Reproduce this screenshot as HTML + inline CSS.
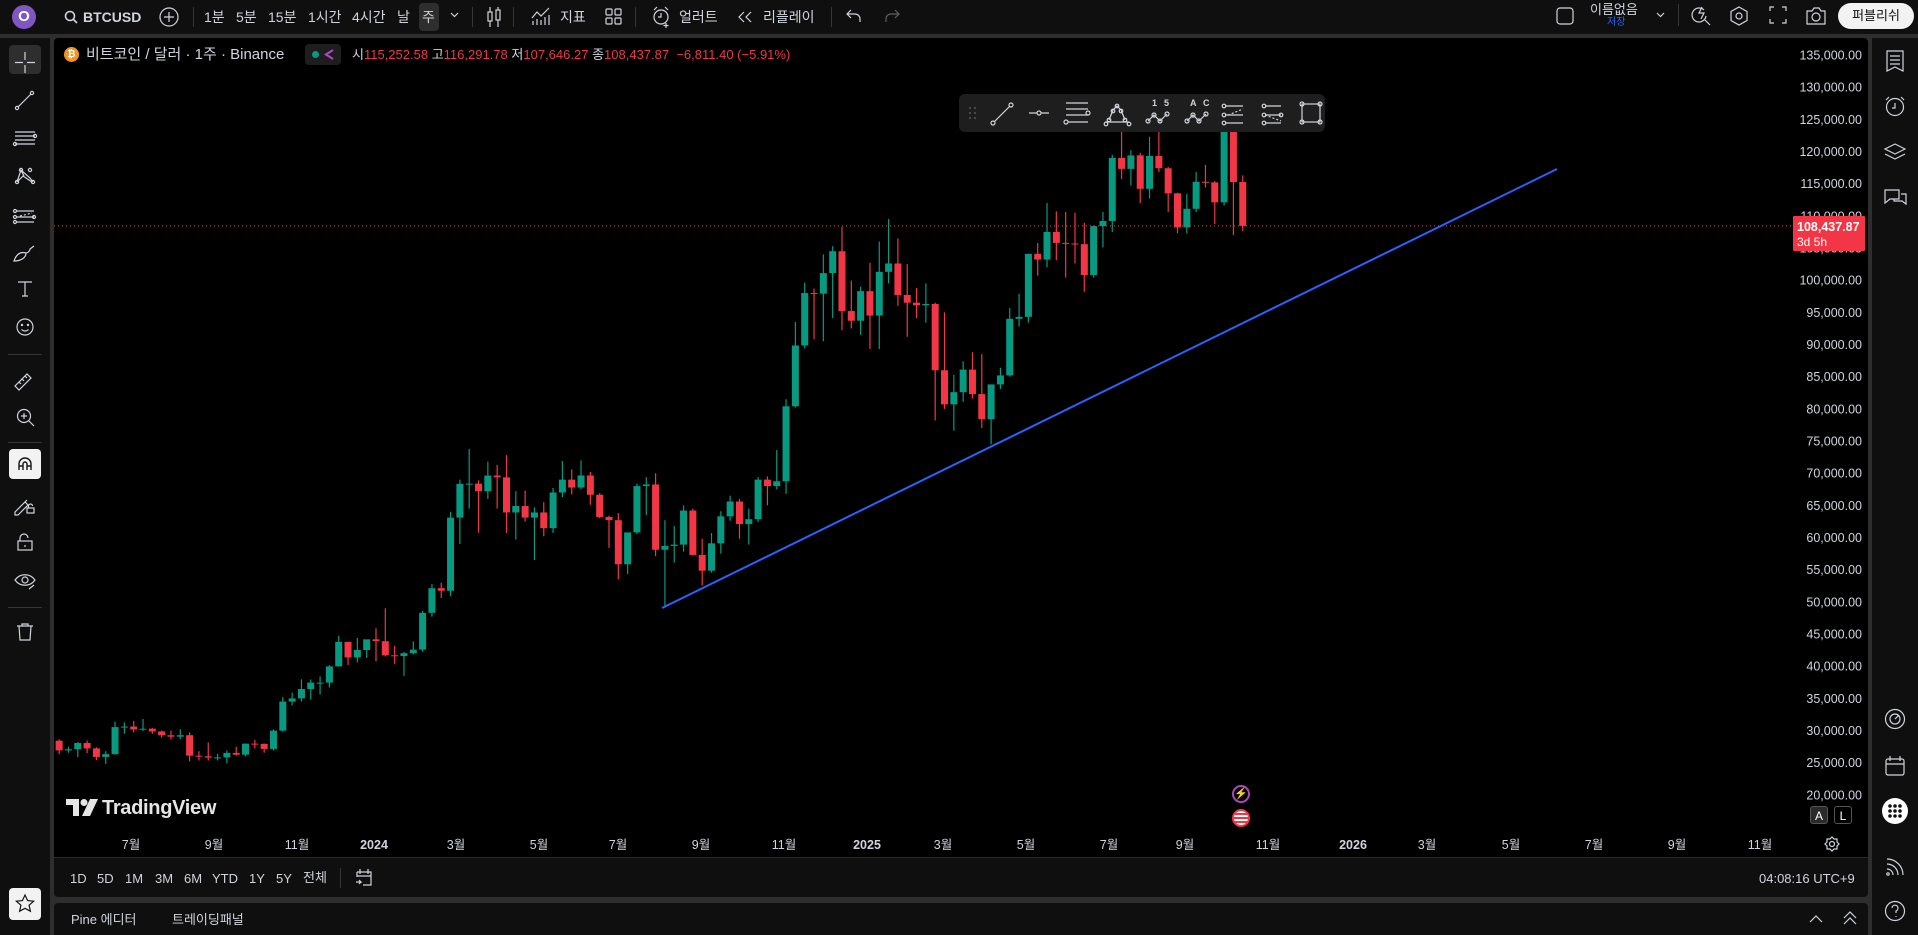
<!DOCTYPE html>
<html><head><meta charset="utf-8">
<style>
*{margin:0;padding:0;box-sizing:border-box}
html,body{width:1918px;height:935px;overflow:hidden;background:#2e2e2e;font-family:"Liberation Sans","Noto Sans CJK KR",sans-serif;color:#d1d4dc}
.abs{position:absolute}
#top{left:0;top:0;width:1918px;height:34px;background:#0f0f0f}
#left{left:0;top:38px;width:50px;height:897px;background:#0f0f0f}
#chart{left:54px;top:38px;width:1814px;height:819px;background:#000;border-radius:4px 4px 0 0;overflow:hidden}
#range{left:54px;top:857px;width:1814px;height:40px;background:#0f0f0f;border-top:1px solid #2a2a2a;border-radius:0 0 4px 4px}
#bottom{left:54px;top:903px;width:1814px;height:32px;background:#0f0f0f;border-radius:4px 4px 0 0}
#right{left:1872px;top:38px;width:46px;height:897px;background:#0f0f0f}
.t{position:absolute;font-size:14px;color:#d1d4dc;white-space:nowrap;line-height:1}
.sep{position:absolute;width:1px;background:#363636}
svg{position:absolute;overflow:visible}
.ic{stroke:#d1d4dc;fill:none;stroke-width:1.2}
</style></head><body>
<div id="top" class="abs">
  <div class="abs" style="left:12px;top:5px;width:24px;height:24px;border-radius:50%;background:#7e57c2;color:#fff;font-size:15px;font-weight:bold;text-align:center;line-height:24px">O</div>
  <svg style="left:64px;top:10px" width="14" height="14" class="ic"><circle cx="6" cy="6" r="4.5" stroke-width="1.6"/><line x1="9.5" y1="9.5" x2="13" y2="13" stroke-width="1.6"/></svg>
  <div class="t" style="left:83px;top:10px;font-weight:bold;font-size:14px">BTCUSD</div>
  <svg style="left:159px;top:7px" width="20" height="20" class="ic"><circle cx="10" cy="10" r="9"/><path d="M10 5v10M5 10h10"/></svg>
  <div class="sep" style="left:193px;top:7px;height:20px"></div>
  <div class="t" style="left:204px;top:10px">1분</div>
  <div class="t" style="left:236px;top:10px">5분</div>
  <div class="t" style="left:268px;top:10px">15분</div>
  <div class="t" style="left:308px;top:10px">1시간</div>
  <div class="t" style="left:352px;top:10px">4시간</div>
  <div class="t" style="left:397px;top:10px">날</div>
  <div class="abs" style="left:419px;top:3px;width:20px;height:28px;background:#2e2e2e;border-radius:4px"></div>
  <div class="t" style="left:422px;top:10px">주</div>
  <svg style="left:450px;top:12px" width="9" height="6" class="ic"><path d="M1 1l3.5 3.5L8 1"/></svg>
  <div class="sep" style="left:472px;top:7px;height:20px"></div>
  <svg style="left:486px;top:6px" width="16" height="22" class="ic"><path d="M4 1v20M12 1v20"/><rect x="2" y="6" width="4" height="9" fill="#0f0f0f"/><rect x="10" y="4" width="4" height="10" fill="#0f0f0f"/></svg>
  <div class="sep" style="left:513px;top:7px;height:20px"></div>
  <svg style="left:531px;top:6px" width="20" height="20" class="ic"><path d="M1 12l5-6 4 4 8-8"/><path d="M2 19v-4M6 19v-6M10 19v-5M14 19v-8M18 19v-10"/></svg>
  <div class="t" style="left:560px;top:10px">지표</div>
  <svg style="left:605px;top:8px" width="18" height="18" class="ic"><rect x="1" y="1" width="6" height="6" rx="1"/><rect x="10" y="1" width="6" height="6" rx="1"/><rect x="1" y="10" width="6" height="6" rx="1"/><rect x="10" y="10" width="6" height="6" rx="1"/></svg>
  <div class="sep" style="left:635px;top:7px;height:20px"></div>
  <svg style="left:651px;top:6px" width="22" height="22" class="ic"><circle cx="10" cy="11" r="7"/><path d="M10 7v4h-3M3 4l3-3M17 4l-3-3M15 17v5M12.5 19.5h5"/></svg>
  <div class="t" style="left:679px;top:10px">얼러트</div>
  <svg style="left:738px;top:11px" width="14" height="12" class="ic"><path d="M6 1L1 6l5 5M13 1L8 6l5 5"/></svg>
  <div class="t" style="left:763px;top:10px">리플레이</div>
  <div class="sep" style="left:831px;top:7px;height:20px"></div>
  <svg style="left:846px;top:9px" width="16" height="14" class="ic"><path d="M5 1L1 5l4 4M1 5h8a5 5 0 0 1 5 5v3"/></svg>
  <svg style="left:884px;top:9px" width="16" height="14" class="ic"><path d="M11 1l4 4-4 4M15 5H7a5 5 0 0 0-5 5v3" stroke="#5d606b"/></svg>
  <svg style="left:1556px;top:7px" width="18" height="18" class="ic"><rect x="1" y="1" width="16" height="16" rx="3"/></svg>
  <div class="t" style="left:1590px;top:3px;font-size:13px">이름없음</div>
  <div class="t" style="left:1607px;top:18px;font-size:10px;color:#2962ff">저장</div>
  <svg style="left:1656px;top:12px" width="9" height="6" class="ic"><path d="M1 1l3.5 3.5L8 1"/></svg>
  <div class="sep" style="left:1678px;top:4px;height:22px"></div>
  <svg style="left:1691px;top:6px" width="20" height="20" class="ic"><path d="M13 4a7 7 0 1 0 2 6"/><path d="M11 1l-3 6h5l-3 6"/><path d="M14 14l5 5"/></svg>
  <svg style="left:1729px;top:6px" width="20" height="20" class="ic"><path d="M10 1l8 4.5v9L10 19l-8-4.5v-9z"/><circle cx="10" cy="10" r="3"/></svg>
  <svg style="left:1769px;top:6px" width="18" height="18" class="ic"><path d="M1 5V1h4M13 1h4v4M17 13v4h-4M5 17H1v-4"/></svg>
  <svg style="left:1805px;top:6px" width="22" height="20" class="ic"><path d="M2 5h5l2-3h5l2 3h4v13H2z"/><circle cx="11" cy="11" r="4"/></svg>
  <div class="abs" style="left:1838px;top:3px;width:76px;height:26px;background:#f2f2f2;border-radius:13px;color:#0f0f0f;font-size:13px;text-align:center;line-height:26px">퍼블리쉬</div>
</div>

<div id="left" class="abs">
  <div class="abs" style="left:9px;top:7px;width:32px;height:29px;background:#2e2e2e;border-radius:4px"></div>
  <div class="abs" style="left:9px;top:411px;width:32px;height:30px;background:#f2f2f2;border-radius:4px"></div>
  <div class="abs" style="left:8px;top:316px;width:34px;height:1px;background:#363636"></div>
  <div class="abs" style="left:8px;top:404px;width:34px;height:1px;background:#363636"></div>
  <div class="abs" style="left:8px;top:569px;width:34px;height:1px;background:#363636"></div>
  <svg style="left:0;top:0" width="50" height="897" class="ic">
    <path d="M25 14v8M25 27v8M15 24.5h8M27 24.5h8"/>
    <g transform="translate(0,61)"><path d="M18 8l13-13"/><circle cx="17" cy="9" r="1.6"/><circle cx="32" cy="-6" r="1.6"/></g>
    <g transform="translate(0,100)"><path d="M15-6h20M15-2h20M15 2h20M15 6h20"/><circle cx="35" cy="-2" r="1.6"/><circle cx="15" cy="6" r="1.6"/></g>
    <g transform="translate(0,138)"><path d="M17 6l4-12 9 8 3 4M17 6l6-6 9 6M21-6l3 6"/><circle cx="17" cy="6" r="1.6"/><circle cx="21" cy="-6" r="1.6"/><circle cx="30" cy="-6" r="1.6"/><circle cx="33" cy="6" r="1.6"/></g>
    <g transform="translate(0,178)"><path d="M17-5h17M17 1h17M17 6h17" /><path d="M20 0l12-3" stroke-dasharray="2 2"/><circle cx="15" cy="-5" r="1.5"/><circle cx="15" cy="1" r="1.5"/><circle cx="15" cy="6" r="1.5"/><circle cx="34" cy="1" r="1.5"/></g>
    <g transform="translate(0,215)"><path d="M14 8c2-6 6-10 12-8 0 4-4 8-12 8zM26 0c2 0 4-2 4-4l4-3"/></g>
    <g transform="translate(0,251)"><path d="M18-7h14M25-7v14M22 7h6"/></g>
    <g transform="translate(0,289)"><circle cx="25" cy="0" r="8"/><circle cx="22" cy="-2" r=".6"/><circle cx="28" cy="-2" r=".6"/><path d="M21.5 2.5c2 2 5 2 7 0"/></g>
    <g transform="translate(0,343)"><path d="M15 5l12-12 4 4-12 12zM19 1l2 2M22-2l2 2M25-5l2 2"/></g>
    <g transform="translate(0,379)"><circle cx="24" cy="-1" r="6.5"/><path d="M24-4v6M21-1h6M29 4l5 5"/></g>
    <g transform="translate(0,425)" stroke="#131313" stroke-width="1.4"><path d="M19 7v-6a6 6 0 0 1 12 0v6M19 3h4M27 3h4M23 7v-6a2 2 0 0 1 4 0v6"/></g>
    <g transform="translate(0,466)"><path d="M15 8l10-10 3 3-10 10h-3zM25-2l2-2"/><rect x="27" y="4" width="7" height="5"/><path d="M28.5 4v-2a2 2 0 0 1 4 0"/></g>
    <g transform="translate(0,504)"><rect x="18" y="-1" width="14" height="9"/><path d="M20-1v-3a4 4 0 0 1 8 0M25 3v2"/></g>
    <g transform="translate(0,542)"><path d="M15 0c5-7 15-7 20 0-5 7-15 7-20 0z"/><circle cx="25" cy="0" r="3"/><path d="M29 9l5-4"/></g>
    <g transform="translate(0,594)"><path d="M17-6h16M22-6v-2h6v2M19-6l1 14h10l1-14"/></g>
  </svg>
  <div class="abs" style="left:9px;top:850px;width:32px;height:32px;background:#f2f2f2;border-radius:4px"></div>
  <svg style="left:15px;top:856px" width="20" height="20"><path d="M10 1l2.6 5.6 6 .6-4.5 4 1.3 6L10 14.3 4.6 17.2l1.3-6-4.5-4 6-.6z" fill="none" stroke="#131313" stroke-width="1.2"/></svg>
</div>

<div id="chart" class="abs"><svg id="cs" style="left:0;top:0" width="1814" height="819"></svg></div>

<div id="range" class="abs">
  <div class="t" style="left:16px;top:14px;font-size:13px">1D</div>
  <div class="t" style="left:43px;top:14px;font-size:13px">5D</div>
  <div class="t" style="left:71px;top:14px;font-size:13px">1M</div>
  <div class="t" style="left:101px;top:14px;font-size:13px">3M</div>
  <div class="t" style="left:130px;top:14px;font-size:13px">6M</div>
  <div class="t" style="left:158px;top:14px;font-size:13px">YTD</div>
  <div class="t" style="left:195px;top:14px;font-size:13px">1Y</div>
  <div class="t" style="left:222px;top:14px;font-size:13px">5Y</div>
  <div class="t" style="left:249px;top:13px;font-size:13px">전체</div>
  <div class="sep" style="left:286px;top:10px;height:20px"></div>
  <svg style="left:301px;top:10px" width="18" height="19" class="ic"><path d="M2 4h14v13H8M2 4v5M2 8h14M5 1v5M13 1v5M1 14h5l-2-2M6 14l-2 2"/></svg>
  <div class="t" style="left:1705px;top:14px;font-size:13px">04:08:16 UTC+9</div>
</div>

<div id="bottom" class="abs">
  <div class="t" style="left:17px;top:10px;font-size:13px">Pine 에디터</div>
  <div class="t" style="left:118px;top:10px;font-size:13px">트레이딩패널</div>
  <svg style="left:1755px;top:12px" width="14" height="8" class="ic"><path d="M1 7l6-6 6 6"/></svg>
  <svg style="left:1789px;top:8px" width="14" height="14" class="ic"><path d="M1 7l6-6 6 6M1 13l6-6 6 6"/></svg>
</div>

<div id="right" class="abs">
  <svg style="left:0;top:0" width="46" height="897" class="ic">
    <g transform="translate(23,23)"><path d="M-8-10h16v20l-8-4-8 4z"/><path d="M-5-5h10M-5-1h10M-5 3h10"/></g>
    <g transform="translate(23,68)"><circle cx="0" cy="1" r="8.5"/><path d="M0-3v5h-3M-9-6l3-3M9-6l-3-3"/></g>
    <g transform="translate(23,114)"><path d="M0-8l10 5-10 5-10-5z"/><path d="M-10 2l10 5 10-5"/></g>
    <g transform="translate(23,160)"><path d="M-10-8h14v9h-9l-5 4z"/><path d="M6-4h5v10l-4-3h-8v-2"/></g>
    <g transform="translate(23,681)"><circle cx="0" cy="0" r="9.5"/><circle cx="0" cy="0" r="5"/><path d="M0 0l4-4"/></g>
    <g transform="translate(23,728)"><rect x="-9" y="-7" width="18" height="16" rx="2"/><path d="M-9-2h18M-5-10v5M5-10v5"/></g>
    <g transform="translate(23,773)"><circle cx="0" cy="0" r="13" fill="#fff" stroke="none"/><g fill="#0f0f0f" stroke="none"><circle cx="-5" cy="-5" r="1.8"/><circle cx="0" cy="-5" r="1.8"/><circle cx="5" cy="-5" r="1.8"/><circle cx="-5" cy="0" r="1.8"/><circle cx="0" cy="0" r="1.8"/><circle cx="5" cy="0" r="1.8"/><circle cx="-5" cy="5" r="1.8"/><circle cx="0" cy="5" r="1.8"/><circle cx="5" cy="5" r="1.8"/></g></g>
    <g transform="translate(23,829)"><path d="M-8-8a16 16 0 0 1 16 16M-8-3a11 11 0 0 1 11 11M-8 2a6 6 0 0 1 6 6"/><circle cx="-7" cy="7" r="1.2"/></g>
    <g transform="translate(23,873)"><circle cx="0" cy="0" r="9.5"/><path d="M-3-3a3 3 0 1 1 4 3v2M1 5v1"/></g>
  </svg>
</div>

<script>
const G='#089981',R='#f23645';
const cs=document.getElementById('cs');let h='';
const OX=54,OY=38;
function Y(p){return 55+(135000-p)/5000*32.17-OY;}
const base=Date.UTC(2024,0,1);
function X(d){return 376+(d-base)/864e5*1.3314-OX;}
const tl=[[131,'7월'],[214,'9월'],[297,'11월'],[374,'2024'],[456,'3월'],[539,'5월'],[618,'7월'],[701,'9월'],[784,'11월'],[867,'2025'],[943,'3월'],[1026,'5월'],[1109,'7월'],[1185,'9월'],[1268,'11월'],[1353,'2026'],[1427,'3월'],[1511,'5월'],[1594,'7월'],[1677,'9월'],[1760,'11월']];
for(const [x,s] of tl){h+=`<text x="${x-OX}" y="${849-OY}" fill="#d1d4dc" font-size="12.5" text-anchor="middle" ${/20/.test(s)?'font-weight="bold"':''} font-family="Liberation Sans,Noto Sans CJK KR,sans-serif">${s}</text>`;}
for(let p=135000;p>=20000;p-=5000){const y=Y(p)+4.5;h+=`<text x="${1862-OX}" y="${y}" fill="#d1d4dc" font-size="12.5" text-anchor="end" font-family="Liberation Sans,sans-serif">${p.toLocaleString('en-US')}.00</text>`;}
const D=[[28630,26320,26920],[27500,26560,27100],[28200,25870,28070],[28450,26510,27230],[27400,25400,25900],[26800,24800,26340],[31400,26250,30540],[31280,29500,30620],[31500,29700,30170],[31800,29950,30290],[30400,29500,29860],[30000,28900,29270],[30000,28600,29050],[30200,28700,29280],[29700,25200,26100],[26800,25350,26000],[28150,25330,25800],[26400,25360,25830],[26900,24900,26530],[27480,26100,26250],[28000,26000,27970],[28580,27200,27930],[28000,26540,27150],[30200,26900,29990],[35200,29800,34500],[35900,33900,35000],[37970,34500,36460],[37950,34800,37450],[38420,35600,37450],[40200,36700,39970],[44700,39960,43780],[43800,40200,41370],[44400,40600,42520],[43800,41300,44180],
[45900,40750,43900],[49000,41500,41700],[43200,40300,41580],[42250,38500,42030],[43880,41800,42580],[48600,42250,48300],[52800,47700,52130],[52980,50600,51730],[64000,50900,63100],[69000,59000,68350],[73780,64500,68380],[68900,60750,67200],[71800,66000,69640],[71300,64500,69360],[72800,60700,63900],[67200,59700,64900],[67300,62500,63100],[64700,56500,63900],[65500,60200,61460],[67700,60700,67000],[71900,66300,69000],[70600,66700,67770],[72000,67500,69650],[70200,65100,66650],[66900,63000,63200],[63400,58400,62700],[63800,53500,55850],[59500,54300,60800],[68400,60500,68000],[69400,63500,68250],[70000,57100,58100],[62700,49100,58700],[61800,56100,58900],[65000,57800,64200],[64500,57200,57300],[59800,52550,54850],[60700,54550,59100],[64100,57500,63300],[66500,62600,65600],[66000,59800,62100],[64500,58900,62850],[69400,62400,69000],[69500,65000,68000],[73600,67500,68750],[81500,66800,80400],[93500,80200,89850],[99600,89400,98000],[98700,90800,97900],[104000,90500,101100],[105300,94100,104500],[108300,92200,95200],[99950,92500,93700],[99000,91500,98300],
[102700,89300,94500],[106000,89300,101300],[109500,99500,102600],[106500,96000,97700],[102500,91200,96500],[98800,94100,96100],[99500,93400,96300],[96500,78200,86000],[95000,80000,80700],[85300,76600,82600],[87400,81100,86100],[88800,81600,82300],[88500,77000,78400],[83500,74500,83800],[86400,83100,85200],[95700,85000,94000],[97900,92800,94300],[104100,93400,104100],[105800,100700,103200],[112000,102000,107500],[110700,103100,105800],[110600,100400,105700],[110500,102600,105600],[108900,98200,100800],[108500,100400,108400],[110600,105100,109200],[119500,107500,119000],[123200,115700,117300],[120200,114700,119400],[119800,112000,114200],[122300,112700,119300],[124500,116800,117400],[117600,110600,113500],[113600,107300,108200],[113400,107300,111100],[116800,110600,115300],[117900,114400,115200],[115400,108700,112100],[125700,111600,123500],[126200,107000,115252.58],[116291.78,107646.27,108437.87]];
let o=28430,t=Date.UTC(2023,4,8);
for(const [hi,lo,c] of D){const x=X(t),col=c>=o?G:R;const yt=Y(Math.max(o,c)),yb=Y(Math.min(o,c));
h+=`<line x1="${x}" x2="${x}" y1="${Y(hi)}" y2="${Y(lo)}" stroke="${col}" stroke-width="1.2"/><rect x="${x-3.5}" y="${yt}" width="7" height="${Math.max(1,yb-yt)}" fill="${col}"/>`;o=c;t+=7*864e5;}
const py=Y(108437.87);
h+=`<line x1="0" x2="${1792-OX}" y1="${py}" y2="${py}" stroke="${R}" stroke-width="1" stroke-dasharray="1 3"/>`;
h+=`<line x1="${662-OX}" y1="${608-OY}" x2="${1557-OX}" y2="${169-OY}" stroke="#2962ff" stroke-width="2"/>`;
h+=`<rect x="${1793-OX}" y="${216-OY}" width="${72}" height="35" fill="${R}" rx="1"/><text x="${1797-OX}" y="${231-OY}" fill="#fff" font-size="12.5" font-weight="bold" font-family="Liberation Sans,sans-serif">108,437.87</text><text x="${1797-OX}" y="${246-OY}" fill="#fff" font-size="12" font-family="Liberation Sans,sans-serif">3d 5h</text>`;
cs.innerHTML=h;
</script>

<div class="abs" style="left:64px;top:47px;width:15px;height:15px;border-radius:50%;background:#f7931a;color:#fff;font-size:10px;font-weight:bold;text-align:center;line-height:15px">₿</div>
<div class="t" style="left:86px;top:47px;font-size:15px">비트코인 / 달러 · 1주 · Binance</div>
<div class="abs" style="left:305px;top:44px;width:36px;height:21px;background:#1e1e1e;border-radius:4px"></div>
<div class="abs" style="left:312px;top:51px;width:7px;height:7px;border-radius:50%;background:#089981"></div>
<svg style="left:324px;top:49px" width="11" height="11"><path d="M9 1L2 5.5 9 10" fill="none" stroke="#ab47bc" stroke-width="2.2"/></svg>
<div class="t" style="left:352px;top:48px;font-size:13px"><span style="color:#d1d4dc">시</span><span style="color:#f23645">115,252.58</span> <span style="color:#d1d4dc">고</span><span style="color:#f23645">116,291.78</span> <span style="color:#d1d4dc">저</span><span style="color:#f23645">107,646.27</span> <span style="color:#d1d4dc">종</span><span style="color:#f23645">108,437.87 &nbsp;−6,811.40 (−5.91%)</span></div>

<div class="abs" style="left:959px;top:94px;width:366px;height:38px;background:#1e1e1e;border-radius:6px"></div>
<svg style="left:959px;top:94px" width="366" height="38" class="ic">
  <g fill="#555" stroke="none"><circle cx="11" cy="14" r="1"/><circle cx="16" cy="14" r="1"/><circle cx="11" cy="19" r="1"/><circle cx="16" cy="19" r="1"/><circle cx="11" cy="24" r="1"/><circle cx="16" cy="24" r="1"/></g>
  <path d="M35 28l16-16"/><circle cx="34" cy="29" r="2"/><circle cx="52" cy="11" r="2"/>
  <path d="M70 19h8M82 19h8"/><circle cx="80" cy="19" r="2"/>
  <path d="M107 9h22M107 15h22M107 21h22M109 28h20"/><circle cx="129" cy="19" r="2"/><circle cx="107" cy="28" r="2"/>
  <path d="M146 28h24M150 26l4-10 4-4 4 4 4 10"/><circle cx="150" cy="26" r="1.8"/><circle cx="154" cy="17" r="1.8"/><circle cx="158" cy="12" r="1.8"/><circle cx="162" cy="17" r="1.8"/><circle cx="166" cy="26" r="1.8"/><circle cx="147" cy="30" r="1.8"/><circle cx="170" cy="30" r="1.8"/>
  <path d="M189 27l6-6 6 6 7-7"/><circle cx="189" cy="27" r="2"/><circle cx="195" cy="21" r="2"/><circle cx="201" cy="27" r="2"/><circle cx="208" cy="20" r="2"/>
  <text x="193" y="12" fill="#d1d4dc" stroke="none" font-size="9" font-weight="bold" font-family="Liberation Sans">1</text><text x="205" y="12" fill="#d1d4dc" stroke="none" font-size="9" font-weight="bold" font-family="Liberation Sans">5</text>
  <path d="M228 27l6-6 6 6 7-7"/><circle cx="228" cy="27" r="2"/><circle cx="234" cy="21" r="2"/><circle cx="240" cy="27" r="2"/><circle cx="247" cy="20" r="2"/>
  <text x="231" y="12" fill="#d1d4dc" stroke="none" font-size="9" font-weight="bold" font-family="Liberation Sans">A</text><text x="244" y="12" fill="#d1d4dc" stroke="none" font-size="9" font-weight="bold" font-family="Liberation Sans">C</text>
  <path d="M266 12h18M266 21h18M266 29h18"/><path d="M269 21l15-6" stroke-dasharray="2 2"/><circle cx="265" cy="12" r="1.8"/><circle cx="265" cy="21" r="1.8"/><circle cx="265" cy="29" r="1.8"/>
  <path d="M306 12h16M306 21h16M306 29h16"/><path d="M306 21l16 6" stroke-dasharray="2 2"/><circle cx="305" cy="12" r="1.8"/><circle cx="305" cy="21" r="1.8"/><circle cx="305" cy="29" r="1.8"/><circle cx="322" cy="21" r="1.8"/>
  <rect x="343" y="10" width="18" height="18"/><circle cx="343" cy="10" r="2"/><circle cx="361" cy="10" r="2"/><circle cx="343" cy="28" r="2"/><circle cx="361" cy="28" r="2"/>
</svg>

<div class="abs" style="left:1232px;top:785px;width:18px;height:18px;border-radius:50%;border:2px solid #ab47bc;color:#f23645;font-size:11px;text-align:center;line-height:14px">⚡</div>
<div class="abs" style="left:1232px;top:809px;width:18px;height:18px;border-radius:50%;border:2px solid #f23645;background:repeating-linear-gradient(#fff 0 2px,#f23645 2px 4px)"></div>

<svg style="left:66px;top:799px" width="32" height="17"><path d="M0 0h13v17H7V6H0z" fill="#e6e6e6"/><circle cx="18" cy="3.5" r="3.5" fill="#e6e6e6"/><path d="M24 0h8L24 17h-8z" fill="#e6e6e6"/></svg>
<div class="t" style="left:102px;top:798px;font-size:20px;font-weight:bold;color:#e6e6e6;letter-spacing:-0.3px">TradingView</div>

<div class="abs" style="left:1810px;top:806px;width:18px;height:18px;background:#2a2a2a;border-radius:3px;font-size:12px;text-align:center;line-height:18px;color:#fff;border:1px solid #555">A</div>
<div class="abs" style="left:1834px;top:806px;width:18px;height:18px;border-radius:3px;font-size:12px;text-align:center;line-height:18px;color:#fff;border:1px solid #555">L</div>
<svg style="left:1824px;top:836px" width="16" height="16" class="ic"><circle cx="8" cy="8" r="2.5"/><path d="M8 1l2 2h3v3l2 2-2 2v3h-3l-2 2-2-2H3v-3L1 8l2-2V3h3z"/></svg>
</body></html>
